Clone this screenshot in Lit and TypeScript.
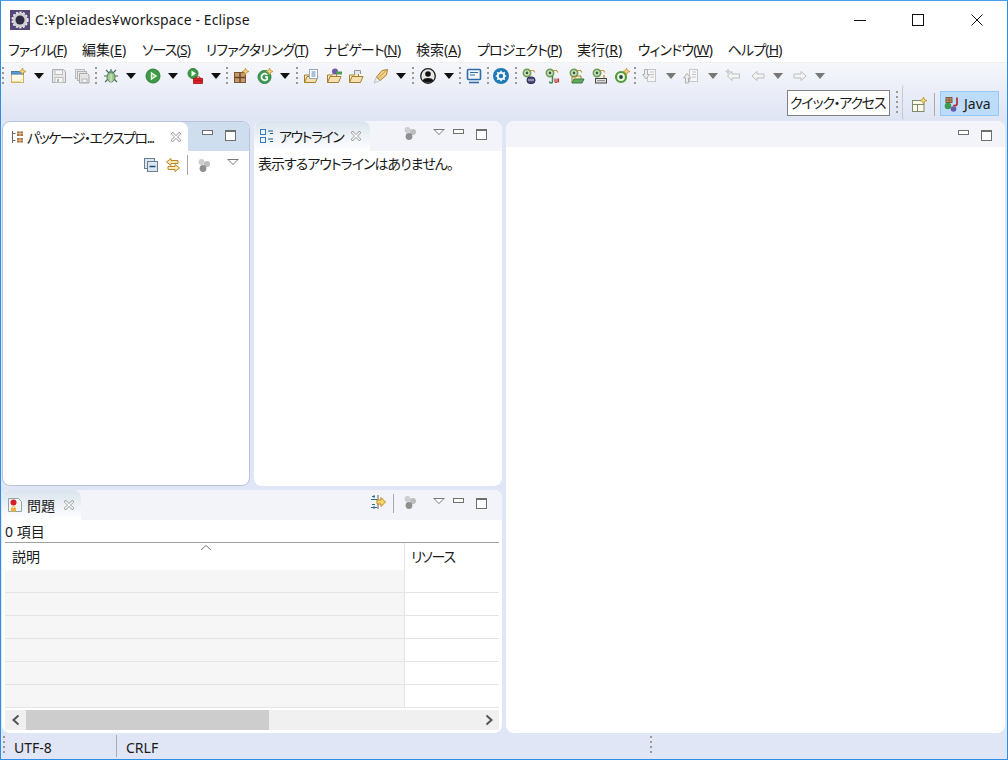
import { LitElement, html, css, svg } from "lit";
import { customElement } from "lit/decorators.js";

const ic = (body: unknown, size = 16) =>
  html`<svg width=${size} height=${size} viewBox="0 0 16 16" fill="none">${body}</svg>`;

const star = (x: number, y: number) => svg`<path d="M${x} ${y - 3.5}l1 2.5 2.5 1-2.5 1-1 2.5-1-2.5-2.5-1 2.5-1z" fill="#f6d77c" stroke="#b8923a" stroke-width=".8"/>`;
const eye = svg`<circle cx="5" cy="5" r="3.6" fill="#dfe9d2" stroke="#6f9f55" stroke-width="1.7"/><circle cx="5" cy="5" r="1.4" fill="#2f5f3a"/><path d="M8 2.5h3.5l1.5 2" stroke="#c9963a" stroke-width="1.2"/>`;
const folder = (fill = "#f5dfae") => svg`<path d="M1.5 14.5V7h5l1-1.5h3V8" fill="#fbeecb" stroke="#a67c2d"/><path d="M1.5 14.5l2.5-6h11l-2.5 6z" fill=${fill} stroke="#a67c2d"/>`;

const icons: Record<string, unknown> = {
  newWiz: ic(svg`<rect x="1.5" y="3.5" width="12" height="11" fill="#fdf9e6" stroke="#c9b26a"/><rect x="1.5" y="3.5" width="12" height="2.6" fill="#5b9bd5" stroke="#3d76ad" stroke-width=".8"/><path d="M2 13.5h8l3-3" stroke="#f1d67e"/>${star(12.5, 3.5)}`),
  save: ic(svg`<path d="M1.5 1.5h11l2 2v11h-13z" fill="#e8e8e8" stroke="#ababab"/><rect x="4" y="2" width="7.5" height="4.5" fill="#f6f6f6" stroke="#bdbdbd"/><rect x="4" y="9.5" width="8" height="5" fill="#f6f6f6" stroke="#bdbdbd"/><rect x="6" y="11" width="2" height="3" fill="#b5b5b5"/>`),
  saveAll: ic(svg`<rect x="1.5" y="1.5" width="9" height="9" fill="#e8e8e8" stroke="#bbb"/><rect x="3.5" y="3.5" width="9" height="9" fill="#e8e8e8" stroke="#b5b5b5"/><path d="M5.5 5.5h8l1.5 1.5v8h-9.5z" fill="#e6e6e6" stroke="#ababab"/><rect x="8" y="11" width="5" height="3.5" fill="#f5f5f5" stroke="#b5b5b5"/>`),
  bug: ic(svg`<path d="M3 2l3 3M13 2l-3 3M1 8h3M12 8h3M2 14l3-3M14 14l-3-3M8 1v2" stroke="#47665a" stroke-width="1.1"/><ellipse cx="8" cy="9" rx="4" ry="5" fill="#9fc98f" stroke="#4f7f5f"/><circle cx="8" cy="4.5" r="2" fill="#5f9178"/><path d="M8 5v9" stroke="#e2efd9"/>`),
  run: ic(svg`<circle cx="8" cy="8" r="7" fill="#3d9b45" stroke="#2f7f3a"/><path d="M5.8 3.8l6.4 4.2-6.4 4.2z" fill="#fff"/><path d="M6.8 5.8l3.4 2.2-3.4 2.2z" fill="#8ecb6a"/>`),
  ext: ic(svg`<circle cx="6" cy="5.5" r="5" fill="#3d9b45" stroke="#2f7f3a"/><path d="M4.5 2.5l4.5 3-4.5 3z" fill="#fff"/><rect x="6.5" y="10.5" width="9" height="5" fill="#e0202a" stroke="#a81018" stroke-width=".8"/><path d="M9 10.5V9h4v1.5M6.5 12.8h9" stroke="#a81018" stroke-width=".9"/>`),
  pkgNew: ic(svg`<rect x="1.5" y="4.5" width="11" height="10" fill="#c89a6a" stroke="#7d5638"/><path d="M7 4.5v10M1.5 9.5h11" stroke="#6a4328" stroke-width="1.4"/>${star(12.5, 3.5)}`),
  classNew: ic(svg`<circle cx="7.5" cy="9" r="6.5" fill="#3c9a52" stroke="#2f7f45"/><path d="M10.2 6.8a3.3 3.3 0 1 0 0 4.4V9H8" stroke="#fff" stroke-width="1.7"/>${star(12.5, 3.5)}`),
  openType: ic(svg`${folder()}<rect x="6.5" y="1.5" width="8" height="9" fill="#fff" stroke="#9aa7b8"/><path d="M8.5 4h4M8.5 6h4M8.5 8h4" stroke="#4f86c0"/>`),
  openTask: ic(svg`${folder()}<circle cx="9" cy="3.5" r="3" fill="#6a5aa8"/><rect x="10" y="3.5" width="6" height="3" fill="#4f9b55"/>`),
  openRes: ic(svg`${folder()}<path d="M6.5 6V2.5h6V6" fill="#dfe6ee" stroke="#8b98a8"/>`),
  pen: ic(svg`<path d="M3.5 9L1 15l6-2.5z" fill="#f2f2f2" stroke="#c0c0c0"/><path d="M14.5 1.5L9 2.5 3.5 9 7 12.5l6.5-5.5z" fill="#f3d28c" stroke="#a87f35"/><path d="M5 10.5l8-8" stroke="#c89a45"/>`),
  person: ic(svg`<circle cx="8" cy="8" r="7.3" fill="#e8e8e8" stroke="#1c1c1c" stroke-width="1.3"/><circle cx="8" cy="6" r="2.8" fill="#111"/><path d="M2.8 12.5c1-3.2 9.4-3.2 10.4 0A7 7 0 0 1 2.8 12.5z" fill="#111"/>`),
  monitor: ic(svg`<rect x="1.5" y="1.5" width="13" height="10" rx="1" fill="#f2f6fb" stroke="#2f6ca8" stroke-width="1.6"/><path d="M4 4.5h8M4 7h5" stroke="#2f6ca8" stroke-width="1.2"/><path d="M3 14.5h10" stroke="#2f6ca8" stroke-width="1.6"/>`),
  gear: ic(svg`<circle cx="8" cy="8" r="8" fill="#1f78b8"/><circle cx="8" cy="8" r="3.2" stroke="#fff" stroke-width="1.8"/><path d="M8 2.8v2M8 11.2v2M2.8 8h2M11.2 8h2M4.3 4.3l1.4 1.4M10.3 10.3l1.4 1.4M11.7 4.3l-1.4 1.4M5.7 10.3l-1.4 1.4" stroke="#fff" stroke-width="1.6"/>`),
  t1: ic(svg`${eye}<rect x="5" y="9" width="8" height="6.5" rx="3" fill="#4f4a78" stroke="#2e2b50"/><path d="M6 12h6" stroke="#d8d4ea"/>`),
  t2: ic(svg`${eye}<path d="M7.5 8v5.5a1.5 1.5 0 0 1-3 0" stroke="#3e8a4f" stroke-width="1.5"/><path d="M10 10.5v3a1 1 0 0 0 2 0v-3M13.5 10.5v4" stroke="#b83a3a" stroke-width="1.2"/>`),
  t3: ic(svg`${eye}<path d="M3 15V9h4l1-1h4v3" fill="#fbeecb" stroke="#a67c2d"/><path d="M3 15l2-4h10l-2 4z" fill="#5faa5f" stroke="#3a7a45"/>`),
  t4: ic(svg`${eye}<rect x="3.5" y="10.5" width="11" height="4.5" fill="#e4e4e4" stroke="#444"/><path d="M5 12.7h8" stroke="#888"/><path d="M12 7v3" stroke="#c9963a" stroke-width="1.4"/>`),
  t5: ic(svg`<circle cx="7" cy="9" r="5" fill="#eef5e4" stroke="#4f9b3a" stroke-width="2.2"/><circle cx="7" cy="9" r="1.9" fill="#1f4a3a"/>${star(12.5, 3.5)}`),
  nextAnno: ic(svg`<rect x="5.5" y="1.5" width="8" height="12" fill="#f6f6f6" stroke="#c6c6c6"/><path d="M8 4h4M8 6.5h4M8 9h4" stroke="#c6c6c6"/><path d="M2.5 1.5h3v5h2L4 11 .5 6.5h2z" fill="#ececec" stroke="#b2b2b2"/>`),
  prevAnno: ic(svg`<rect x="6.5" y="1.5" width="8" height="12" fill="#f6f6f6" stroke="#c6c6c6"/><path d="M9 4h4M9 6.5h4M9 9h4" stroke="#c6c6c6"/><path d="M2.5 15v-5h-2L4 5.5 8 10H5.5v5z" fill="#ececec" stroke="#b2b2b2"/>`),
  lastEdit: ic(svg`<path d="M7 3.5L2.5 8 7 12.5V10h7.5V6H7z" fill="#f4f4f4" stroke="#bdbdbd"/><path d="M3 1l.7 1.8 1.8.7-1.8.7L3 6l-.7-1.8L.5 3.5l1.8-.7z" fill="#d8d8d8" stroke="#bbb" stroke-width=".6"/>`),
  back: ic(svg`<path d="M7 3.5L2 8l5 4.5V10h7V6H7z" fill="#f4f4f4" stroke="#bdbdbd"/>`),
  forward: ic(svg`<path d="M9 3.5L14 8l-5 4.5V10H2V6h7z" fill="#f4f4f4" stroke="#bdbdbd"/>`),
  persp: ic(svg`<rect x="1.5" y="3.5" width="11.5" height="11" fill="#fbf8ea" stroke="#7f8a6f"/><path d="M1.5 7.5h11.5M6.5 7.5v7" stroke="#7f8a6f"/>${star(12.5, 3.5)}`),
  java: ic(svg`<rect x="2" y="1.5" width="6" height="5" fill="#c89a6a" stroke="#7d5638"/><path d="M5 1.5v5M2 4h6" stroke="#7d5638"/><circle cx="4" cy="10" r="3.3" fill="#3f9b52"/><circle cx="9.5" cy="13" r="2.8" fill="#6a5aa8"/><path d="M13 1.5v6.5a2 2 0 0 1-3.5 1" stroke="#b52a2a" stroke-width="1.7"/>`),
  pkgView: ic(svg`<path d="M2.5 2v12M2.5 4.5h3M2.5 11.5h3" stroke="#6a6a6a"/><rect x="7" y="2.5" width="6" height="4.5" fill="#a5703f"/><path d="M10 2.5v4.5M7 4.7h6" stroke="#f0dcc0" stroke-width=".7"/><rect x="7" y="9" width="6" height="4.5" fill="#a5703f"/><path d="M10 9v4.5M7 11.2h6" stroke="#f0dcc0" stroke-width=".7"/>`),
  outline: ic(svg`<rect x="1.5" y="1.5" width="5" height="5" fill="#eef5fc" stroke="#2f7ec0"/><rect x="1.5" y="9.5" width="5" height="5" fill="#eef5fc" stroke="#2f7ec0"/><path d="M9 3h5M11 5.5h3M9 11h5M11 13.5h3" stroke="#1f5f90"/>`),
  problems: ic(svg`<path d="M1.5 1.5h10l3 3v10h-13z" fill="#f2f4f2" stroke="#8ea6a8"/><circle cx="6.5" cy="5.5" r="3" fill="#d81f26"/><rect x="4" y="11" width="5" height="3.5" fill="#eeb040"/><path d="M5 11a1.5 1.5 0 0 1 3 0" stroke="#eeb040"/>`),
  close: html`<svg width="10" height="10" viewBox="0 0 12 12" fill="none"><path d="M2 2l8 8M10 2l-8 8" stroke="#969696" stroke-width="3.4" stroke-linecap="square"/><path d="M2 2l8 8M10 2l-8 8" stroke="#fff" stroke-width="1.7" stroke-linecap="square"/></svg>`,
  collapse: ic(svg`<rect x="1.5" y="1.5" width="10" height="10" fill="#dce6f0" stroke="#6a7f90"/><rect x="4.5" y="4.5" width="10" height="10" fill="#dce6f0" stroke="#6a7f90"/><path d="M6.5 9.5h6" stroke="#14507a" stroke-width="1.4"/>`),
  link: ic(svg`<path d="M6 1.5L1.5 5 6 8.5V6.5h7v-3H6z" fill="#fbe7b4" stroke="#b98728"/><path d="M10 7.5L14.5 11 10 14.5v-2H3v-3h7z" fill="#fbe7b4" stroke="#b98728"/>`),
  focus: ic(svg`<circle cx="5.5" cy="5" r="3" fill="#cdcdcd"/><circle cx="11" cy="7" r="3" fill="#bdbdbd"/><circle cx="7" cy="11.5" r="3.4" fill="#8f8f8f"/>`),
  errWarn: ic(svg`<path d="M2 2.5h3M4 1v3M1 5.5h6M1 13.5h6M4 12v3M2 10.5h3" stroke="#2f7090"/><path d="M8 1v14" stroke="#666"/><path d="M7 6h4V3.5L15.5 8 11 12.5V10H7z" fill="#f6d56a" stroke="#c08a1f"/>`),
};

const tools: [string, number][] = [
  ["grip", 3], ["newWiz", 18], ["arrow", 39], ["save", 59], ["saveAll", 82], ["grip", 96],
  ["bug", 111], ["arrow", 131], ["run", 153], ["arrow", 173], ["ext", 195], ["arrow", 216], ["grip", 227],
  ["pkgNew", 241], ["classNew", 265], ["arrow", 285], ["grip", 297],
  ["openType", 311], ["openTask", 334], ["openRes", 356], ["pen", 381], ["arrow", 401], ["grip", 413],
  ["person", 428], ["arrow", 449], ["grip", 460], ["monitor", 474], ["grip", 488], ["gear", 501], ["grip", 516],
  ["t1", 530], ["t2", 553], ["t3", 577], ["t4", 600], ["t5", 622], ["grip", 635],
  ["nextAnno", 650], ["dim", 671], ["prevAnno", 691], ["dim", 713], ["lastEdit", 733], ["back", 758], ["dim", 778], ["forward", 800], ["dim", 820],
];

const menus: [string, string, boolean][] = [
  ["ファイル", "F", true], ["編集", "E", false], ["ソース", "S", true], ["リファクタリング", "T", true], ["ナビゲート", "N", true],
  ["検索", "A", false], ["プロジェクト", "P", true], ["実行", "R", false], ["ウィンドウ", "W", true], ["ヘルプ", "H", true],
];

const widthOf = (k: string) => (k === "grip" ? 2 : k === "arrow" || k === "dim" ? 10 : 16);

@customElement("app-root")
export class AppRoot extends LitElement {
  static styles = css`
    :host {
      display: flex;
      flex-direction: column;
      box-sizing: border-box;
      width: 1008px;
      height: 760px;
      border: 1px solid #2b8fe6;
      border-top-color: #4a9fe8;
      background: #fff;
      overflow: hidden;
      font-family: "Noto Sans", "Noto Sans CJK JP", sans-serif;
      font-size: 14px;
      color: #1a1a1a;
      font-feature-settings: "palt";
    }
    svg { display: block; flex: none; }
    .title { display: flex; align-items: center; height: 37px; flex: none; padding: 0 1px 0 9px; }
    .app-icon { width: 20px; height: 20px; margin-right: 5px; }
    .title-text { flex: 1; font-size: 14px; letter-spacing: 0.13px; }
    .win-btn { width: 58.5px; display: flex; justify-content: center; }
    .menu { display: flex; height: 24px; flex: none; align-items: center; padding-left: 7px; gap: 15.7px; }
    .menu span { line-height: 24px; white-space: nowrap; }
    .menu .kana { letter-spacing: -0.85px; }
    .bars { flex: none; height: 58px; background: linear-gradient(#f6f7fb, #dfe4f4); border-top: 1px solid #f0f0f0; box-sizing: border-box; }
    .toolbar { display: flex; align-items: center; height: 25px; }
    .grip { width: 2px; height: 18px; background: repeating-linear-gradient(#9a9a90 0 2px, transparent 2px 5px); flex: none; }
    .arrow { width: 0; height: 0; border: 5px solid transparent; border-top: 6px solid #111; border-bottom: 0; flex: none; }
    .arrow.dim { border-top-color: #777; }
    .persp { display: flex; justify-content: flex-end; align-items: flex-start; height: 32px; }
    .quick { box-sizing: border-box; width: 103px; height: 26px; margin-top: 2px; border: 1px solid #808080; background: #fff; line-height: 24px; padding-left: 2px; white-space: nowrap; overflow: hidden; letter-spacing: -1.2px; }
    .grip.small { height: 25px; margin: 3px 0 0 6px; }
    .curve { width: 3px; height: 35px; margin: -3px 0 0 4px; border-left: 1px solid #c4c8d2; border-radius: 3px 0 0 3px; box-sizing: border-box; }
    .persp-new { margin: 9px 0 0 6px; }
    .vsep { width: 1px; height: 23px; background: #a8abb2; margin: 5px 0 0 7px; }
    .java { box-sizing: border-box; display: flex; align-items: center; gap: 4px; width: 59px; height: 25px; margin: 3px 8px 0 5px; padding-left: 3px; background: #bddcfa; border: 1px solid #93c9f7; }
    .main { flex: 1; background: #e1e6f6; padding: 1px 2px 0 1px; display: grid; grid-template-columns: 248px 248px 1fr; grid-template-rows: 365px 243px; gap: 4px; min-height: 0; }
    .panel { background: #fff; border-radius: 8px; display: flex; flex-direction: column; overflow: hidden; box-sizing: border-box; min-width: 0; }
    .panel.active { border: 1px solid #b9c4d8; }
    .outline { grid-column: 2; grid-row: 1; }
    .problems { grid-column: 1 / 3; grid-row: 2; }
    .editor { grid-column: 3; grid-row: 1 / 3; }
    .head { display: flex; height: 30px; flex: none; background: #f2f4fa; }
    .active .head { background: #cfdeee; height: 29px; }
    .tab { display: flex; align-items: center; height: 100%; padding-left: 5px; border-radius: 8px 8px 0 0; background: linear-gradient(#dae4ee, #fff); white-space: nowrap; }
    .active .tab { background: #fff; width: 185px; padding-left: 7px; box-sizing: border-box; }
    .outline .tab { width: 116px; box-sizing: border-box; }
    .problems .tab { width: 79px; box-sizing: border-box; }
    .tab-label { margin-left: 4px; }
    .active .tab-label { margin-left: 1px; }
    .tab-label.kana { letter-spacing: -1.5px; }
    .tab-close { margin-left: auto; margin-right: 7px; }
    .outline .tab-close { margin-right: 9px; }
    .head-tools { display: flex; margin-left: auto; align-items: flex-start; padding-top: 4px; }
    .min { width: 11px; height: 5px; box-sizing: border-box; border: 1px solid #6f6f6f; background: #fff; margin-top: 4px; }
    .max { width: 11px; height: 11px; box-sizing: border-box; border: 1px solid #6f6f6f; border-top-width: 2px; background: #fff; margin: 4px 15px 0 12px; }
    .active .max { margin-right: 13px; }
    .editor .max { margin-right: 13px; }
    .focus { margin-right: 15px; }
    .view-menu { width: 0; height: 0; border: 6px solid transparent; border-top: 6px solid #777; border-bottom: 0; position: relative; margin: 4px 8px 0 0; }
    .view-menu::after { content: ""; position: absolute; left: -4px; top: -5px; border: 4px solid transparent; border-top: 4px solid #fff; border-bottom: 0; }
    .sub { display: flex; align-items: center; height: 28px; padding-left: 140px; }
    .sub .view-menu { margin: -6px 0 0 15px; }
    .sub-link { margin-left: 6px; }
    .sub-sep { width: 1px; height: 20px; background: #a8a8a8; margin: 0 8px 0 6px; }
    .head-sep { width: 1px; height: 19px; background: #a8a8a8; margin: 0 8px 0 7px; }
    .msg { padding: 3px 0 0 4px; line-height: 20px; letter-spacing: -1px; }
    .editor .head { height: 26px; }
    .editor .head-tools { padding-top: 5px; }
    .count { line-height: 24px; height: 22px; margin: 0 3px; border-bottom: 1px solid #a0a0a0; }
    .table { margin: 0 3px; display: flex; flex-direction: column; }
    .row { display: flex; height: 23px; box-sizing: border-box; border-bottom: 1px solid #e4e4e4; }
    .row.th { height: 27px; border-bottom: 0; position: relative; align-items: center; }
    .c1 { width: 399px; background: #f6f6f6; border-right: 1px solid #e4e4e4; box-sizing: content-box; }
    .c2 { flex: 1; }
    .th .c1 { background: #fff; padding-left: 7px; box-sizing: border-box; width: 400px; height: 100%; line-height: 27px; }
    .th .c2 { padding-left: 6px; line-height: 27px; height: 100%; letter-spacing: -1.2px; }
    .caret { position: absolute; left: 195px; top: 1px; }
    .scroll { display: flex; align-items: center; height: 20px; margin: 2px 3px 0; background: #f0f0f0; }
    .sb-btn { width: 21px; display: flex; justify-content: center; }
    .thumb { width: 243px; height: 100%; background: #cdcdcd; }
    .sb-end { margin-left: auto; }
    .status { flex: none; display: flex; align-items: center; height: 26px; background: #e1e6f6; padding-left: 2px; }
    .status .grip { height: 20px; }
    .status .enc { margin-left: 9px; width: 102px; padding-top: 2px; }
    .status .sep { width: 1px; height: 22px; background: #a8abb2; }
    .status .eol { margin-left: 9px; width: 524px; padding-top: 2px; }
  `;

  toolbar() {
    // the centres in the table are page x, the row starts after the 1px window border
    let prevEnd = 1;
    return tools.map(([k, x]) => {
      const w = widthOf(k);
      const style = `margin-left:${x - w / 2 - prevEnd}px`;
      prevEnd = x + w / 2;
      if (k === "grip") return html`<div class="grip" style=${style}></div>`;
      if (k === "arrow") return html`<div class="arrow" style=${style}></div>`;
      if (k === "dim") return html`<div class="arrow dim" style=${style}></div>`;
      return html`<div style=${style}>${icons[k]}</div>`;
    });
  }

  viewTools(extra: unknown = null) {
    return html`<div class="head-tools">${extra}<div class="min"></div><div class="max"></div></div>`;
  }

  render() {
    const focus = html`<div class="focus">${icons.focus}</div><div class="view-menu"></div>`;
    return html`
      <div class="title">
        <svg class="app-icon" viewBox="0 0 20 20">
          <rect width="20" height="20" fill="#54467a" />
          <circle cx="10" cy="10" r="7.5" fill="#cfcfd2" />
          <circle cx="10" cy="10" r="4.5" fill="#2f2b40" />
          <circle cx="10" cy="10" r="7.8" fill="none" stroke="#efefef" stroke-width="1.6" stroke-dasharray="2 1.6" />
        </svg>
        <span class="title-text">C:¥pleiades¥workspace - Eclipse</span>
        <div class="win-btn"><svg width="12" height="12"><path d="M0 6.5h12" stroke="#111" /></svg></div>
        <div class="win-btn"><svg width="12" height="12"><rect x=".5" y=".5" width="11" height="11" stroke="#111" fill="none" /></svg></div>
        <div class="win-btn"><svg width="12" height="12"><path d="M.5.5l11 11M11.5.5l-11 11" stroke="#111" /></svg></div>
      </div>
      <div class="menu">
        ${menus.map(([t, k, kana]) => html`<span class=${kana ? "kana" : ""}>${t}(<u>${k}</u>)</span>`)}
      </div>
      <div class="bars">
        <div class="toolbar">${this.toolbar()}</div>
        <div class="persp">
          <div class="quick">クイック・アクセス</div>
          <div class="grip small"></div>
          <div class="curve"></div>
          <div class="persp-new">${icons.persp}</div>
          <div class="vsep"></div>
          <div class="java">${icons.java}<span>Java</span></div>
        </div>
      </div>
      <div class="main">
        <section class="panel active">
          <div class="head">
            <div class="tab">
              ${icons.pkgView}<span class="tab-label kana">パッケージ・エクスプロ...</span>
              <span class="tab-close">${icons.close}</span>
            </div>
            ${this.viewTools()}
          </div>
          <div class="sub">
            ${icons.collapse}
            <div class="sub-link">${icons.link}</div>
            <div class="sub-sep"></div>
            ${icons.focus}
            <div class="view-menu"></div>
          </div>
        </section>
        <section class="panel outline">
          <div class="head">
            <div class="tab">
              ${icons.outline}<span class="tab-label kana">アウトライン</span>
              <span class="tab-close">${icons.close}</span>
            </div>
            ${this.viewTools(focus)}
          </div>
          <div class="msg">表示するアウトラインはありません。</div>
        </section>
        <section class="panel problems">
          <div class="head">
            <div class="tab">
              ${icons.problems}<span class="tab-label">問題</span>
              <span class="tab-close">${icons.close}</span>
            </div>
            ${this.viewTools(html`
              ${icons.errWarn}
              <div class="head-sep"></div>
              ${focus}
            `)}
          </div>
          <div class="count">0 項目</div>
          <div class="table">
            <div class="row th">
              <div class="c1">説明</div>
              <div class="c2">リソース</div>
              <svg class="caret" width="12" height="7"><path d="M1 6l5-4.5L11 6" stroke="#777" fill="none" /></svg>
            </div>
            ${[0, 1, 2, 3, 4, 5].map(() => html`<div class="row"><div class="c1"></div><div class="c2"></div></div>`)}
          </div>
          <div class="scroll">
            <div class="sb-btn"><svg width="10" height="12"><path d="M7.5 1.5L2.5 6l5 4.5" stroke="#555" stroke-width="2" fill="none" /></svg></div>
            <div class="thumb"></div>
            <div class="sb-btn sb-end"><svg width="10" height="12"><path d="M2.5 1.5L7.5 6l-5 4.5" stroke="#555" stroke-width="2" fill="none" /></svg></div>
          </div>
        </section>
        <section class="panel editor">
          <div class="head">${this.viewTools()}</div>
        </section>
      </div>
      <div class="status">
        <div class="grip"></div>
        <div class="enc">UTF-8</div>
        <div class="sep"></div>
        <div class="eol">CRLF</div>
        <div class="grip"></div>
      </div>
    `;
  }
}
